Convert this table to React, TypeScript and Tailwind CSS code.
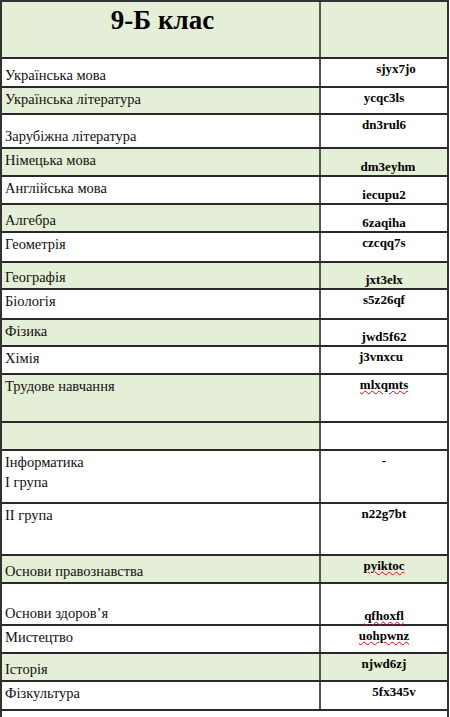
type Row = {
  h: string;
  name?: string[];
  nameAlign?: 'top' | 'bottom';
  code?: string;
  codeAlign?: 'top' | 'bottom';
  codeShift?: string;
  leftGreen?: boolean;
  rightGreen?: boolean;
  squiggle?: boolean;
};

const rows: Row[] = [
  { h: 'h-[29px]', name: ['Українська мова'], nameAlign: 'bottom', code: 'sjyx7jo', codeAlign: 'top', codeShift: 'pl-[24px]' },
  { h: 'h-[27px]', name: ['Українська література'], nameAlign: 'top', code: 'ycqc3ls', codeAlign: 'top', leftGreen: true },
  { h: 'h-[34px]', name: ['Зарубіжна література'], nameAlign: 'bottom', code: 'dn3rul6', codeAlign: 'top' },
  { h: 'h-[28px]', name: ['Німецька мова'], nameAlign: 'top', code: 'dm3eyhm', codeAlign: 'bottom', codeShift: 'pl-[8px]', leftGreen: true, rightGreen: true },
  { h: 'h-[28px]', name: ['Англійська мова'], nameAlign: 'top', code: 'iecupu2', codeAlign: 'bottom' },
  { h: 'h-[28px]', name: ['Алгебра'], nameAlign: 'bottom', code: '6zaqiha', codeAlign: 'bottom', leftGreen: true },
  { h: 'h-[30px]', name: ['Геометрія'], nameAlign: 'top', code: 'czcqq7s', codeAlign: 'top' },
  { h: 'h-[27px]', name: ['Географія'], nameAlign: 'bottom', code: 'jxt3elx', codeAlign: 'bottom', leftGreen: true, rightGreen: true },
  { h: 'h-[30px]', name: ['Біологія'], nameAlign: 'top', code: 's5z26qf', codeAlign: 'top' },
  { h: 'h-[27px]', name: ['Фізика'], nameAlign: 'top', code: 'jwd5f62', codeAlign: 'bottom', leftGreen: true },
  { h: 'h-[28px]', name: ['Хімія'], nameAlign: 'top', code: 'j3vnxcu', codeAlign: 'top', codeShift: 'pr-[6px]' },
  { h: 'h-[48px]', name: ['Трудове навчання'], nameAlign: 'top', code: 'mlxqmts', codeAlign: 'top', leftGreen: true, squiggle: true },
  { h: 'h-[28px]', leftGreen: true },
  { h: 'h-[53px]', name: ['Інформатика', 'І група'], nameAlign: 'top', code: '-', codeAlign: 'top' },
  { h: 'h-[52px]', name: ['ІІ група'], nameAlign: 'top', code: 'n22g7bt', codeAlign: 'top' },
  { h: 'h-[28px]', name: ['Основи правознавства'], nameAlign: 'bottom', code: 'pyiktoc', codeAlign: 'top', leftGreen: true, rightGreen: true, squiggle: true },
  { h: 'h-[42px]', name: ['Основи здоров’я'], nameAlign: 'bottom', code: 'qfhoxfl', codeAlign: 'bottom', squiggle: true },
  { h: 'h-[28px]', name: ['Мистецтво'], nameAlign: 'top', code: 'uohpwnz', codeAlign: 'top', squiggle: true },
  { h: 'h-[28px]', name: ['Історія'], nameAlign: 'bottom', code: 'njwd6zj', codeAlign: 'top', leftGreen: true, rightGreen: true },
  { h: 'h-[29px]', name: ['Фізкультура'], nameAlign: 'top', code: '5fx345v', codeAlign: 'top', codeShift: 'pl-[20px]' },
];

function TableRow({ row }: { row: Row }) {
  const leftBg = row.leftGreen ? 'bg-[#e5eed6]' : 'bg-white';
  const rightBg = row.rightGreen ? 'bg-[#e5eed6]' : 'bg-white';
  return (
    <div className={`flex box-border border-b-2 border-[#2a2a2a] ${row.h}`}>
      <div
        className={`w-[319px] border-r-2 border-[#555] flex flex-col pl-[3px] pr-[2px] ${leftBg} ${
          row.nameAlign === 'bottom' ? 'justify-end pb-[1px]' : 'justify-start pt-[1px]'
        }`}
      >
        {row.name?.map((n) => (
          <div key={n} className="text-[14.5px] leading-[20px] text-[#111] whitespace-nowrap">
            {n}
          </div>
        ))}
      </div>
      <div
        className={`flex-1 flex flex-col items-center ${rightBg} ${row.codeShift ?? ''} ${
          row.codeAlign === 'bottom' ? 'justify-end pb-[1px]' : 'justify-start pt-[2px]'
        }`}
      >
        {row.code && (
          <span
            className={`font-bold text-[13px] leading-[15px] text-black ${
              row.squiggle ? 'underline decoration-wavy decoration-red-600 decoration-1 underline-offset-[1px]' : ''
            }`}
          >
            {row.code}
          </span>
        )}
      </div>
    </div>
  );
}

export default function App() {
  return (
    <div className="w-[450px] h-[717px] overflow-hidden bg-white font-['Liberation_Serif','Times_New_Roman',serif]">
      <div className="w-[449px] border-x-2 border-t-2 border-[#333] box-border">
        {/* header */}
        <div className="flex h-[57px] box-border border-b-2 border-[#2a2a2a]">
          <div className="w-[319px] border-r-2 border-[#555] bg-[#e5eed6] flex justify-center pt-[2px]">
            <span className="font-bold text-[27px] leading-[32px] text-black pl-[4px]">9-Б клас</span>
          </div>
          <div className="flex-1 bg-[#e5eed6]" />
        </div>
        {rows.map((r, i) => (
          <TableRow key={i} row={r} />
        ))}
        <div className="h-[40px] bg-white" />
      </div>
    </div>
  );
}
